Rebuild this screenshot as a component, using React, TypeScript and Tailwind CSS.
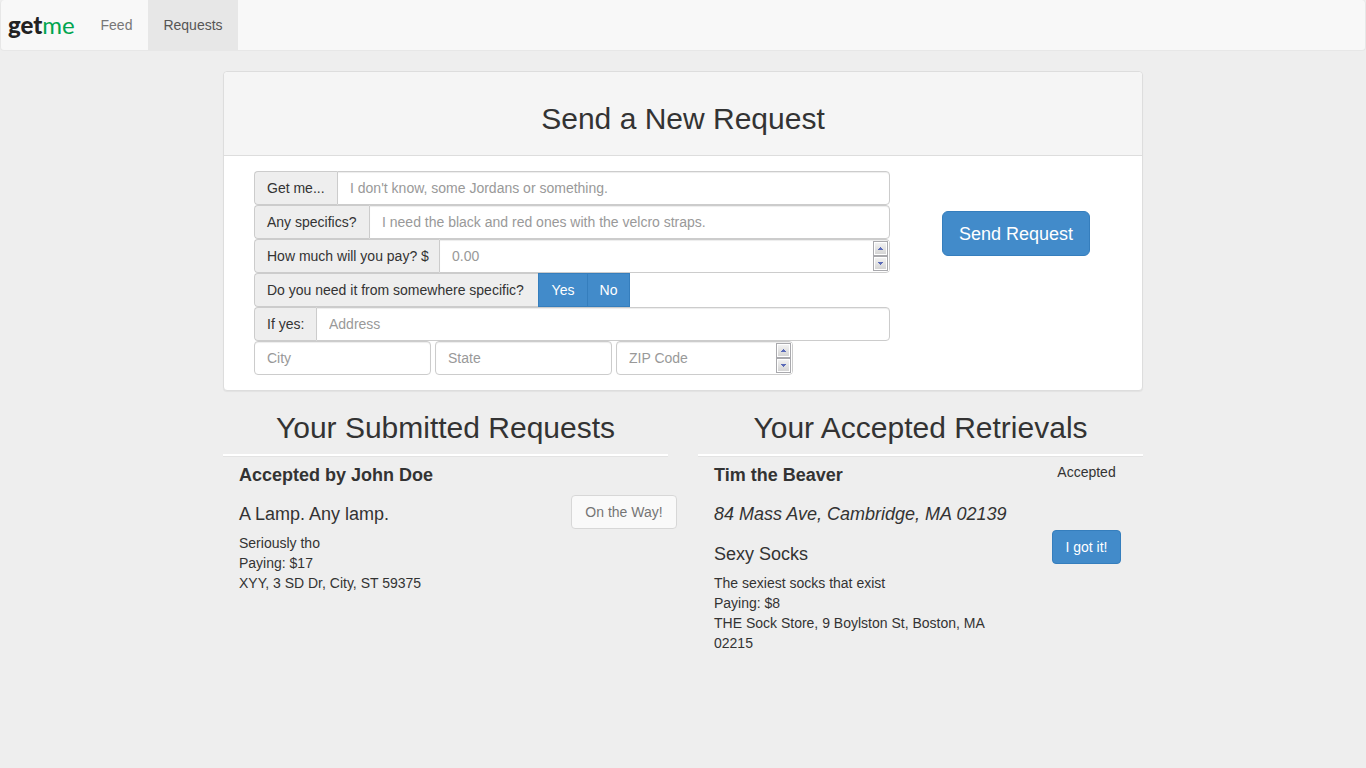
import React from "react";

const fieldClass =
  "h-[34px] w-full min-w-0 border border-[#ccc] bg-white px-3 text-sm text-[#555] shadow-[inset_0_1px_1px_rgba(0,0,0,0.075)] outline-none placeholder:text-[#999] [appearance:textfield] [&::-webkit-inner-spin-button]:appearance-none [&::-webkit-outer-spin-button]:appearance-none";

function Addon({ htmlFor, width, children }: { htmlFor: string; width: string; children: React.ReactNode }) {
  return (
    <label
      htmlFor={htmlFor}
      className={`flex h-[34px] shrink-0 items-center whitespace-nowrap rounded-l border border-r-0 border-[#ccc] bg-[#eee] pl-3 text-sm text-[#333] ${width}`}
    >
      {children}
    </label>
  );
}

function SpinButton({ label, points, onClick }: { label: string; points: string; onClick: () => void }) {
  return (
    <button
      type="button"
      aria-label={label}
      onClick={onClick}
      className="flex h-[15px] w-[15px] items-center justify-center border border-[#a9a9ad] bg-linear-to-b from-[#f4f4f4] to-[#d2d2d2] shadow-[inset_0_0_0_1px_#fff]"
    >
      <svg width="5" height="3" viewBox="0 0 5 3" shapeRendering="crispEdges" aria-hidden="true">
        <path d={points} fill="#5b6bb8" />
      </svg>
    </button>
  );
}

function NumberField({
  id,
  placeholder,
  label,
  className,
}: {
  id: string;
  placeholder: string;
  label?: string;
  className: string;
}) {
  const ref = React.useRef<HTMLInputElement>(null);
  return (
    <div className="relative min-w-0 flex-1">
      <input
        ref={ref}
        id={id}
        type="number"
        aria-label={label}
        placeholder={placeholder}
        className={`${fieldClass} ${className}`}
      />
      <div className="absolute right-px top-0.5 flex flex-col bg-white pr-px">
        <SpinButton label="Increase" points="M2 0h1v1h1v1h1v1H0V2h1V1h1z" onClick={() => ref.current?.stepUp()} />
        <SpinButton label="Decrease" points="M0 0h5v1H4v1H3v1H2V2H1V1H0z" onClick={() => ref.current?.stepDown()} />
      </div>
    </div>
  );
}

function ColumnTitle({ children }: { children: React.ReactNode }) {
  return (
    <h2 className="border-b-2 border-white pb-2.5 text-center text-3xl leading-[33px] shadow-[0_1px_0_#e3e3e3]">
      {children}
    </h2>
  );
}

const blueButton = "border border-[#357ebd] bg-[#428bca] text-white hover:bg-[#3276b1]";

export default function App() {
  return (
    <div className="min-h-screen bg-[#eee] font-['Liberation_Sans',Arial,sans-serif] text-sm leading-5 text-[#333]">
      <nav className="flex h-[51px] rounded border border-t-0 border-[#e7e7e7] bg-[#f8f8f8]">
        <a
          href="#home"
          className="flex w-[84px] items-center pl-[7px] font-['Lato','Liberation_Sans',sans-serif] text-2xl text-[#00a54f]"
        >
          <span className="font-black text-[#222]">get</span>me
        </a>
        <a href="#feed" className="flex w-[63px] items-center justify-center text-[#777]">
          Feed
        </a>
        <a
          href="#requests"
          aria-current="page"
          className="flex w-[90px] items-center justify-center bg-[#e7e7e7] text-[#555]"
        >
          Requests
        </a>
      </nav>

      <main className="mx-auto mt-5 max-w-[920px]">
        <section className="rounded border border-[#ddd] bg-white shadow-[0_1px_1px_rgba(0,0,0,0.05)]">
          <header className="rounded-t border-b border-[#ddd] bg-[#f5f5f5] px-4 pb-5 pt-[30px]">
            <h2 className="text-center text-3xl leading-[33px]">Send a New Request</h2>
          </header>
          <form className="flex py-[15px] pl-[30px]" onSubmit={(e) => e.preventDefault()}>
            <div className="w-[636px]">
              <div className="flex">
                <Addon htmlFor="item" width="w-[83px]">
                  Get me...
                </Addon>
                <input
                  id="item"
                  type="text"
                  placeholder="I don't know, some Jordans or something."
                  className={`${fieldClass} rounded-r`}
                />
              </div>
              <div className="flex">
                <Addon htmlFor="specifics" width="w-[115px]">
                  Any specifics?
                </Addon>
                <input
                  id="specifics"
                  type="text"
                  placeholder="I need the black and red ones with the velcro straps."
                  className={`${fieldClass} rounded-r`}
                />
              </div>
              <div className="flex">
                <Addon htmlFor="price" width="w-[185px]">
                  How much will you pay? $
                </Addon>
                <NumberField id="price" placeholder="0.00" className="rounded-r" />
              </div>
              <div className="flex">
                <Addon htmlFor="place-yes" width="w-[284px]">
                  Do you need it from somewhere specific?
                </Addon>
                <button id="place-yes" type="button" className={`h-[34px] w-[50px] ${blueButton}`}>
                  Yes
                </button>
                <button type="button" className={`-ml-px h-[34px] w-[43px] ${blueButton}`}>
                  No
                </button>
              </div>
              <div className="flex">
                <Addon htmlFor="address" width="w-[62px]">
                  If yes:
                </Addon>
                <input id="address" type="text" placeholder="Address" className={`${fieldClass} rounded-r`} />
              </div>
              <div className="flex w-[539px] gap-1">
                <div className="min-w-0 flex-1">
                  <input type="text" aria-label="City" placeholder="City" className={`${fieldClass} rounded`} />
                </div>
                <div className="min-w-0 flex-1">
                  <input type="text" aria-label="State" placeholder="State" className={`${fieldClass} rounded`} />
                </div>
                <NumberField id="zip" label="ZIP Code" placeholder="ZIP Code" className="rounded" />
              </div>
            </div>
            <div className="flex flex-1 items-start justify-center pt-10">
              <button type="submit" className={`h-[45px] rounded-md px-4 text-lg ${blueButton}`}>
                Send Request
              </button>
            </div>
          </form>
        </section>

        <div className="grid grid-cols-2 gap-[30px] pt-5">
          <section>
            <ColumnTitle>Your Submitted Requests</ColumnTitle>
            <div className="flex pl-4">
              <div className="flex-1 pt-[9px]">
                <h4 className="text-lg font-bold leading-5">Accepted by John Doe</h4>
                <h4 className="mt-[19px] text-lg leading-5">A Lamp. Any lamp.</h4>
                <p className="mt-[9px]">Seriously tho</p>
                <p>Paying: $17</p>
                <p>XYY, 3 SD Dr, City, ST 59375</p>
              </div>
              <div className="w-[97px] pt-[39px]">
                <button
                  type="button"
                  disabled
                  className="h-[34px] w-[106px] whitespace-nowrap rounded border border-[#ccc] bg-white text-[#333] opacity-65"
                >
                  On the Way!
                </button>
              </div>
            </div>
          </section>

          <section>
            <ColumnTitle>Your Accepted Retrievals</ColumnTitle>
            <div className="flex pl-4">
              <div className="flex-1 pt-[9px]">
                <h4 className="text-lg font-bold leading-5">Tim the Beaver</h4>
                <h4 className="mt-[19px] text-lg italic leading-5">84 Mass Ave, Cambridge, MA 02139</h4>
                <h4 className="mt-5 text-lg leading-5">Sexy Socks</h4>
                <p className="mt-[9px]">The sexiest socks that exist</p>
                <p>Paying: $8</p>
                <p className="max-w-[300px]">THE Sock Store, 9 Boylston St, Boston, MA 02215</p>
              </div>
              <div className="flex w-[113px] flex-col items-center pt-1.5">
                <p>Accepted</p>
                <button type="button" className={`mt-12 h-[34px] rounded px-3 ${blueButton}`}>
                  I got it!
                </button>
              </div>
            </div>
          </section>
        </div>
      </main>
    </div>
  );
}
